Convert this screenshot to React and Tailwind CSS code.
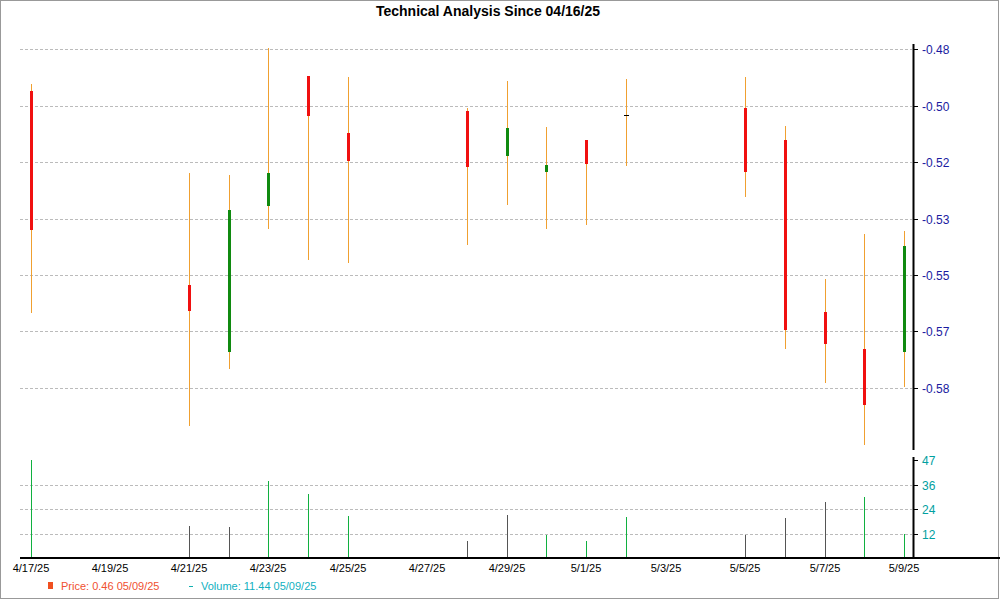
const candles = [
  [31, 84, 313, 91, 230, 'r'], [189, 173, 426, 285, 311, 'r'], [229, 175, 369, 210, 352, 'g'],
  [268, 48, 229, 173, 206, 'g'], [308, 76, 260, 76, 116, 'r'], [348, 77, 263, 133, 161, 'r'],
  [467, 108, 245, 111, 167, 'r'], [507, 81, 205, 128, 156, 'g'], [546, 127, 229, 165, 172, 'g'],
  [586, 140, 225, 140, 164, 'r'], [626, 79, 166, 115, 115, 'd'], [745, 77, 197, 108, 172, 'r'],
  [785, 126, 349, 140, 330, 'r'], [825, 279, 383, 312, 344, 'r'], [864, 234, 445, 349, 405, 'r'],
  [904, 231, 387, 246, 352, 'g'],
];
const vols = [[31, 460, 'g'], [189, 526, 'k'], [229, 527, 'k'], [268, 481, 'g'], [308, 494, 'g'], [348, 516, 'g'],
  [467, 541, 'k'], [507, 515, 'k'], [546, 535, 'g'], [586, 541, 'g'], [626, 517, 'g'], [745, 535, 'k'],
  [785, 518, 'k'], [825, 502, 'k'], [864, 497, 'g'], [904, 534, 'g']];
const priceTicks = [[49, '-0.48'], [106, '-0.50'], [162, '-0.52'], [219, '-0.53'], [275, '-0.55'], [331, '-0.57'], [388, '-0.58']];
const volTicks = [[460, '47'], [485, '36'], [509, '24'], [534, '12']];
const dates = [[31, '4/17/25'], [110, '4/19/25'], [189, '4/21/25'], [268, '4/23/25'], [348, '4/25/25'], [427, '4/27/25'],
  [507, '4/29/25'], [586, '5/1/25'], [666, '5/3/25'], [745, '5/5/25'], [825, '5/7/25'], [904, '5/9/25']];

export default function App() {
  return (
    <div className="w-[1000px] h-[600px] bg-white" style={{ fontFamily: '"Liberation Sans", Arial, sans-serif' }}>
      <svg width="1000" height="600" className="block">
        <rect x="0.5" y="0.5" width="998" height="598" fill="none" stroke="#999" />
        <text x="488" y="16" textAnchor="middle" fontSize="14" fontWeight="bold" fill="#000">Technical Analysis Since 04/16/25</text>
        {priceTicks.map(([y, l]) => (
          <g key={l}>
            <line x1="20" x2="912" y1={y + 0.5} y2={y + 0.5} stroke="#bbb" strokeDasharray="3 2" />
            <line x1="913" x2="918" y1={y + 0.5} y2={y + 0.5} stroke="#000" />
            <text x="922" y={y + 5} fontSize="12" fill="#1a1aa0">{l}</text>
          </g>
        ))}
        {volTicks.map(([y, l]) => (
          <g key={l}>
            {l !== '47' && <line x1="20" x2="912" y1={y + 0.5} y2={y + 0.5} stroke="#bbb" strokeDasharray="3 2" />}
            <line x1="913" x2="918" y1={y + 0.5} y2={y + 0.5} stroke="#000" />
            <text x="922" y={y + 5} fontSize="12" fill="#00a0a0">{l}</text>
          </g>
        ))}
        <line x1="913.5" x2="913.5" y1="44" y2="450" stroke="#000" strokeWidth="2" />
        <line x1="913.5" x2="913.5" y1="457" y2="558" stroke="#000" strokeWidth="2" />
        <line x1="20" x2="1000" y1="558" y2="558" stroke="#000" strokeWidth="2" />
        {candles.map(([x, wt, wb, bt, bb, c]) => (
          <g key={x}>
            <line x1={x + 0.5} x2={x + 0.5} y1={wt} y2={wb} stroke="#f0a030" />
            {c === 'd' ? (
              <line x1={x - 2} x2={x + 3} y1={bt + 0.5} y2={bt + 0.5} stroke="#000" />
            ) : (
              <rect x={x - 1} y={bt} width="3" height={bb - bt} fill={c === 'r' ? '#f01010' : '#108a10'} />
            )}
          </g>
        ))}
        {vols.map(([x, y, c]) => (
          <line key={x} x1={x + 0.5} x2={x + 0.5} y1={y} y2="557" stroke={c === 'g' ? '#10b040' : '#555'} />
        ))}
        {dates.map(([x, l]) => (
          <text key={l} x={x} y="572" textAnchor="middle" fontSize="11" fill="#000">{l}</text>
        ))}
        <rect x="48" y="582" width="5" height="7" fill="#f05020" />
        <text x="61" y="590" fontSize="11" fill="#f05030">Price: 0.46  05/09/25</text>
        <line x1="189" x2="193" y1="586.5" y2="586.5" stroke="#10b0b0" />
        <text x="201" y="590" fontSize="11" fill="#10b0c0">Volume: 11.44  05/09/25</text>
      </svg>
    </div>
  );
}
